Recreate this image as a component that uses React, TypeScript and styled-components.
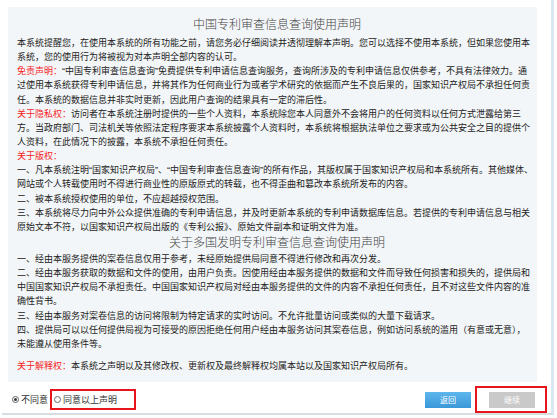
import React, { useState } from 'react'
import styled, { createGlobalStyle } from 'styled-components'

type Line = { label?: string; text?: string }

const partOne: Line[] = [
  { text: '本系统提醒您，在使用本系统的所有功能之前，请您务必仔细阅读并透彻理解本声明。您可以选择不使用本系统，但如果您使用本' },
  { text: '系统，您的使用行为将被视为对本声明全部内容的认可。' },
  { label: '免责声明：', text: '“中国专利审查信息查询”免费提供专利申请信息查询服务，查询所涉及的专利申请信息仅供参考，不具有法律效力。通' },
  { text: '过使用本系统获得专利申请信息，并将其作为任何商业行为或者学术研究的依据而产生不良后果的，国家知识产权局不承担任何责' },
  { text: '任。本系统的数据信息并非实时更新，因此用户查询的结果具有一定的滞后性。' },
  { label: '关于隐私权：', text: '访问者在本系统注册时提供的一些个人资料，本系统除您本人同意外不会将用户的任何资料以任何方式泄露给第三' },
  { text: '方。当政府部门、司法机关等依照法定程序要求本系统披露个人资料时，本系统将根据执法单位之要求或为公共安全之目的提供个' },
  { text: '人资料，在此情况下的披露，本系统不承担任何责任。' },
  { label: '关于版权：' },
  { text: '一、凡本系统注明“国家知识产权局”、“中国专利审查信息查询”的所有作品，其版权属于国家知识产权局和本系统所有。其他媒体、' },
  { text: '网站或个人转载使用时不得进行商业性的原版原式的转载，也不得歪曲和篡改本系统所发布的内容。' },
  { text: '二、被本系统授权使用的单位，不应超越授权范围。' },
  { text: '三、本系统将尽力向中外公众提供准确的专利申请信息，并及时更新本系统的专利申请数据库信息。若提供的专利申请信息与相关' },
  { text: '原始文本不符，以国家知识产权局出版的《专利公报》、原始文件副本和证明文件为准。' },
]

const partTwo: Line[] = [
  { text: '一、经由本服务提供的案卷信息仅用于参考，未经原始提供局同意不得进行修改和再次分发。' },
  { text: '二、经由本服务获取的数据和文件的使用，由用户负责。因使用经由本服务提供的数据和文件而导致任何损害和损失的，提供局和' },
  { text: '中国国家知识产权局不承担责任。中国国家知识产权局对经由本服务提供的文件的内容不承担任何责任，且不对这些文件内容的准' },
  { text: '确性背书。' },
  { text: '三、经由本服务对案卷信息的访问将限制为特定请求的实时访问。不允许批量访问或类似的大量下载请求。' },
  { text: '四、提供局可以以任何提供局视为可接受的原因拒绝任何用户经由本服务访问其案卷信息，例如访问系统的滥用（有意或无意），' },
  { text: '未能遵从使用条件等。' },
]

const renderLines = (lines: Line[]) =>
  lines.map((l, i) => (
    <TextLine key={i}>
      {l.label && <Label>{l.label}</Label>}
      {l.text}
    </TextLine>
  ))

const App: React.FC = () => {
  const [agree, setAgree] = useState(false)

  return (
    <>
      <GlobalStyle />
      <Frame>
        <Notice>
          <Title>中国专利审查信息查询使用声明</Title>
          {renderLines(partOne)}
          <Title $small>关于多国发明专利审查信息查询使用声明</Title>
          {renderLines(partTwo)}
          <Closing>
            <Label>关于解释权：</Label>
            本系统之声明以及其修改权、更新权及最终解释权均属本站以及国家知识产权局所有。
          </Closing>
        </Notice>

        <Footer>
          <Choices>
            <Choice onClick={() => setAgree(false)}>
              <Radio $checked={!agree} />
              不同意
            </Choice>
            <Highlight>
              <Choice onClick={() => setAgree(true)}>
                <Radio $checked={agree} />
                同意以上声明
              </Choice>
            </Highlight>
          </Choices>

          <Actions>
            <Button $variant="primary">返回</Button>
            <ButtonHighlight>
              <Button $variant={agree ? 'primary' : 'disabled'}>继续</Button>
            </ButtonHighlight>
          </Actions>
        </Footer>
      </Frame>
    </>
  )
}

export default App

const GlobalStyle = createGlobalStyle`
  html, body {
    margin: 0;
    padding: 0;
    background: #ffffff;
  }

  body {
    font-family: "Liberation Sans", "Noto Sans CJK SC", sans-serif;
    color: #222;
  }
`

const Frame = styled.div`
  box-sizing: border-box;
  width: 552px;
  height: 415px;
  margin-left: 2px;
  border-right: 3px solid #d9e7f2;
  border-bottom: 2px solid #d6dde3;
  display: flex;
  flex-direction: column;
`

const Notice = styled.div`
  box-sizing: border-box;
  width: 529px;
  height: 375px;
  margin: 7px 0 0 6px;
  padding: 8px 0 0 9px;
  background: #f3f6f8;
`

const Title = styled.div<{ $small?: boolean }>`
  width: 520px;
  text-align: center;
  font-family: "Liberation Serif", "Noto Sans CJK SC", serif;
  font-size: 12px;
  font-weight: 300;
  line-height: ${(p) => (p.$small ? '18px' : '21px')};
  color: #444;
`

const TextLine = styled.div`
  white-space: nowrap;
  font-size: 9px;
  line-height: 14.15px;
  height: 14.15px;
`

const Label = styled.span`
  color: #f41c1c;
`

const Closing = styled(TextLine)`
  margin-top: 8px;
`

const Footer = styled.div`
  flex: 1;
  display: flex;
  align-items: center;
  justify-content: space-between;
  padding: 4px 4px 0 10px;
`

const Choices = styled.div`
  display: flex;
  align-items: center;
  gap: 2px;
`

const Choice = styled.label`
  display: flex;
  align-items: center;
  gap: 2px;
  font-size: 9px;
  color: #333;
  cursor: pointer;
`

const Radio = styled.span<{ $checked: boolean }>`
  box-sizing: border-box;
  width: 7px;
  height: 7px;
  border-radius: 50%;
  border: 1px solid #666;
  background: #fff;
  display: flex;
  align-items: center;
  justify-content: center;

  &::after {
    content: '';
    width: 3px;
    height: 3px;
    border-radius: 50%;
    background: ${(p) => (p.$checked ? '#333' : 'transparent')};
  }
`

const Highlight = styled.div`
  box-sizing: border-box;
  width: 86px;
  height: 21px;
  border: 2px solid #e8141c;
  display: flex;
  align-items: center;
  padding-left: 2px;
`

const Actions = styled.div`
  display: flex;
  align-items: center;
  gap: 4px;
`

const ButtonHighlight = styled.div`
  box-sizing: border-box;
  width: 72px;
  height: 27px;
  border: 2px solid #e8141c;
  display: flex;
  align-items: center;
  justify-content: center;
  padding-left: 2px;
`

const Button = styled.button<{ $variant: 'primary' | 'disabled' }>`
  width: 46px;
  height: 16px;
  padding: 0;
  border: none;
  font-family: "Liberation Sans", "Noto Sans CJK SC", sans-serif;
  font-size: 8px;
  color: #fff;
  background: ${(p) =>
    p.$variant === 'primary'
      ? 'linear-gradient(#5db6ec, #3a98d8)'
      : '#c9c9c9'};
  cursor: ${(p) => (p.$variant === 'primary' ? 'pointer' : 'default')};
`
